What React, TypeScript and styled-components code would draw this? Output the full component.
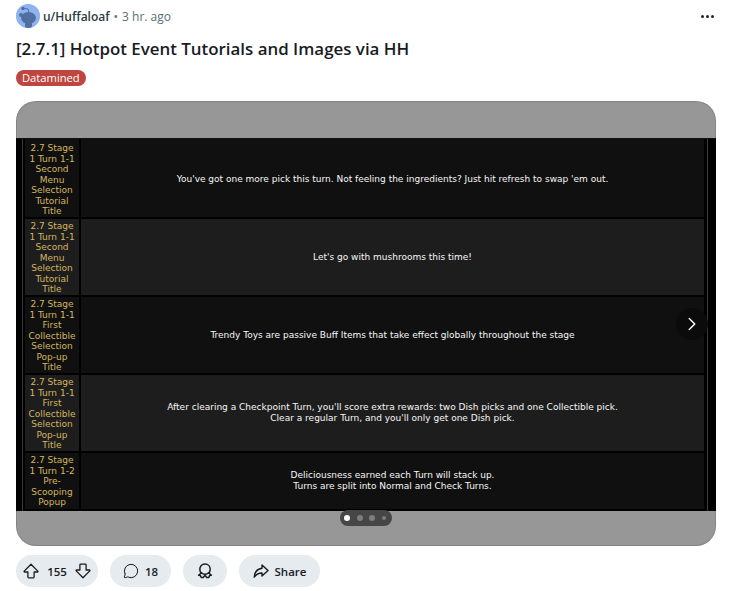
import React from 'react';
import styled, { createGlobalStyle } from 'styled-components';
import { ChevronRight, MessageCircle } from 'lucide-react';

const GlobalStyle = createGlobalStyle`
  html, body {
    margin: 0;
    padding: 0;
    background: #fff;
  }
  body {
    font-family: "Open Sans", "Noto Sans", "Liberation Sans", sans-serif;
  }
`;

const Page = styled.div`
  width: 732px;
  height: 591px;
  box-sizing: border-box;
  padding: 4px 16px 0;
  overflow: hidden;
`;

const Meta = styled.div`
  display: flex;
  align-items: center;
  height: 24px;
  font-size: 12px;
`;

const Avatar = styled.div`
  width: 24px;
  height: 24px;
  border-radius: 50%;
  background: #8fb3f0;
  overflow: hidden;
  margin-right: 3px;
  flex-shrink: 0;
`;

const UserName = styled.span`
  font-weight: 600;
  color: #2a3c42;
`;

const Dot = styled.span`
  margin: 0 4px;
  color: #576f76;
`;

const Age = styled.span`
  color: #576f76;
`;

const MoreButton = styled.div`
  margin-left: auto;
  margin-right: 2px;
  display: flex;
  gap: 2px;
`;

const MoreDot = styled.i`
  width: 3px;
  height: 3px;
  border-radius: 50%;
  background: #1a282d;
`;

const Title = styled.h1`
  margin: 9px 0 0;
  font-size: 16.9px;
  line-height: 24px;
  font-weight: 600;
  color: #181c1f;
`;

const Flair = styled.span`
  display: inline-block;
  margin-top: 9px;
  padding: 0 6px;
  height: 16px;
  line-height: 16px;
  border-radius: 8px;
  background: #bf4640;
  color: #fff;
  font-size: 11.2px;
  vertical-align: top;
`;

const Card = styled.div`
  position: relative;
  margin-top: 15px;
  width: 700px;
  height: 445px;
  padding-top: 37px;
  box-sizing: border-box;
  border-radius: 20px;
  overflow: hidden;
  background: #979797;
  box-shadow: inset 0 0 0 1px rgba(0, 0, 0, 0.12);
`;

const Shot = styled.div`
  height: 373px;
  background: #000;
  display: flex;
  flex-direction: column;
  gap: 2px;
  padding: 0 8px 0 6px;
  box-sizing: border-box;
  border-top: 1px solid #111;
  position: relative;
`;

const ShotEdge = styled.div<{ $left: number }>`
  position: absolute;
  top: 0;
  bottom: 0;
  width: 1px;
  background: #3a3a3a;
  left: ${(p) => p.$left}px;
`;

const Row = styled.div<{ $h: number; $light: boolean }>`
  display: grid;
  grid-template-columns: 54px 623px;
  column-gap: 2px;
  height: ${(p) => p.$h}px;
  margin-left: 3px;
  flex-shrink: 0;
  & > * {
    background: ${(p) => (p.$light ? '#1d1d1d' : '#101010')};
  }
`;

const KeyCell = styled.div<{ $lead: number }>`
  padding-top: ${(p) => p.$lead + 2}px;
  text-align: center;
  font-family: "DejaVu Sans", Verdana, sans-serif;
  font-size: 9px;
  line-height: 10.5px;
  color: #d4b65f;
`;

const TextCell = styled.div<{ $lead: number }>`
  display: flex;
  align-items: center;
  justify-content: center;
  padding-top: ${(p) => p.$lead}px;
  text-align: center;
  font-family: "DejaVu Sans", Verdana, sans-serif;
  font-size: 9px;
  line-height: 11px;
  color: #f7f7f7;
`;

const NextButton = styled.div`
  position: absolute;
  right: 8px;
  top: 207px;
  width: 32px;
  height: 32px;
  border-radius: 50%;
  background: #0b0b0b;
  color: #fff;
  display: flex;
  align-items: center;
  justify-content: center;
`;

const Pager = styled.div`
  position: absolute;
  left: 324px;
  top: 409px;
  height: 16px;
  width: 52px;
  border-radius: 8px;
  background: #464646;
  display: flex;
  align-items: center;
  justify-content: space-between;
  padding: 0 6px 0 4px;
  box-sizing: border-box;
`;

const PagerDot = styled.i<{ $active?: boolean; $small?: boolean }>`
  width: ${(p) => (p.$small ? 4 : 6)}px;
  height: ${(p) => (p.$small ? 4 : 6)}px;
  border-radius: 50%;
  background: ${(p) => (p.$active ? '#fff' : '#7d7d7d')};
`;

const Actions = styled.div`
  display: flex;
  gap: 12px;
  margin-top: 9px;
`;

const Pill = styled.div<{ $w: number }>`
  width: ${(p) => p.$w}px;
  height: 32px;
  border-radius: 16px;
  background: #e5ebee;
  color: #181c1f;
  font-size: 11.5px;
  font-weight: 600;
  display: flex;
  align-items: center;
  justify-content: center;
  box-sizing: border-box;
`;

const Count = styled.span<{ $left: number; $right?: number }>`
  margin-left: ${(p) => p.$left}px;
  margin-right: ${(p) => p.$right ?? 0}px;
`;

const SnooIcon = () => (
  <svg width="24" height="24" viewBox="0 0 24 24">
    <circle cx="12" cy="12" r="12" fill="#8fb3f0" />
    <ellipse cx="12.5" cy="14" rx="7.5" ry="6" fill="#4f6f9f" />
    <rect x="9" y="18" width="7" height="6" rx="2" fill="#4f6f9f" />
    <path d="M13 9 L12 5 L8 4.5" fill="none" stroke="#4f6f9f" strokeWidth="1" />
    <circle cx="7" cy="4.5" r="1.7" fill="#4f6f9f" />
    <circle cx="5" cy="11" r="2" fill="#4f6f9f" />
  </svg>
);

const UpvoteIcon = ({ down }: { down?: boolean }) => (
  <svg width="16" height="16" viewBox="0 0 16 16" style={down ? { transform: 'rotate(180deg)' } : undefined}>
    <path
      d="M8 1.3 L1.2 8.1 C0.9 8.5 1.1 9 1.6 9 H4.9 V14 C4.9 14.5 5.2 14.8 5.7 14.8 H10.3 C10.8 14.8 11.1 14.5 11.1 14 V9 H14.4 C14.9 9 15.1 8.5 14.8 8.1 Z"
      fill="none"
      stroke="#181c1f"
      strokeWidth="1.3"
      strokeLinejoin="round"
    />
  </svg>
);

const AwardIcon = () => (
  <svg width="16" height="16" viewBox="0 0 16 16" fill="none" stroke="#181c1f" strokeWidth="1.5" strokeLinejoin="round">
    <path d="M4.4 10.2 C3.4 9.2 2.8 7.8 2.8 6.2 C2.8 3.2 5 1 8 1 C11 1 13.2 3.2 13.2 6.2 C13.2 7.8 12.6 9.2 11.6 10.2" />
    <path d="M4.4 9.8 L1.6 12.2 L3.4 12.4 L4.2 14.6 L6.2 14.6 L8 12.2 L9.8 14.6 L11.8 14.6 L12.6 12.4 L14.4 12.2 L11.6 9.8 C10.6 10.8 9.4 11.2 8 11.2 C6.6 11.2 5.4 10.8 4.4 9.8 Z" />
  </svg>
);

const ShareIcon = () => (
  <svg width="16" height="16" viewBox="0 0 16 16" fill="none" stroke="#181c1f" strokeWidth="1.4" strokeLinejoin="round">
    <path d="M9 2 L15 7.6 L9 13 V10 C5.6 10 3 11.4 1.2 14.2 C1.4 9.6 4 6 9 5.2 Z" />
  </svg>
);

const rows = [
  {
    key: ['2.7 Stage', '1 Turn 1-1', 'Second', 'Menu', 'Selection', 'Tutorial', 'Title'],
    text: ["You've got one more pick this turn. Not feeling the ingredients? Just hit refresh to swap 'em out."],
    h: 78,
    lead: 2,
    light: false,
  },
  {
    key: ['2.7 Stage', '1 Turn 1-1', 'Second', 'Menu', 'Selection', 'Tutorial', 'Title'],
    text: ["Let's go with mushrooms this time!"],
    h: 76,
    lead: 0,
    light: true,
  },
  {
    key: ['2.7 Stage', '1 Turn 1-1', 'First', 'Collectible', 'Selection', 'Pop-up', 'Title'],
    text: ['Trendy Toys are passive Buff Items that take effect globally throughout the stage'],
    h: 76,
    lead: 0,
    light: false,
  },
  {
    key: ['2.7 Stage', '1 Turn 1-1', 'First', 'Collectible', 'Selection', 'Pop-up', 'Title'],
    text: [
      "After clearing a Checkpoint Turn, you'll score extra rewards: two Dish picks and one Collectible pick.",
      "Clear a regular Turn, and you'll only get one Dish pick.",
    ],
    h: 76,
    lead: 0,
    light: true,
  },
  {
    key: ['2.7 Stage', '1 Turn 1-2', 'Pre-', 'Scooping', 'Popup'],
    text: ['Deliciousness earned each Turn will stack up.', 'Turns are split into Normal and Check Turns.'],
    h: 56,
    lead: 0,
    light: false,
  },
];

export default function App() {
  return (
    <Page>
      <GlobalStyle />
      <Meta>
        <Avatar>
          <SnooIcon />
        </Avatar>
        <UserName>u/Huffaloaf</UserName>
        <Dot>•</Dot>
        <Age>3 hr. ago</Age>
        <MoreButton>
          <MoreDot />
          <MoreDot />
          <MoreDot />
        </MoreButton>
      </Meta>
      <Title>[2.7.1] Hotpot Event Tutorials and Images via HH</Title>
      <Flair>Datamined</Flair>
      <Card>
        <Shot>
          <ShotEdge $left={6} />
          <ShotEdge $left={691} />
          {rows.map((r, i) => (
            <Row key={i} $h={r.h} $light={r.light}>
              <KeyCell $lead={r.lead}>
                {r.key.map((line, j) => (
                  <div key={j}>{line}</div>
                ))}
              </KeyCell>
              <TextCell $lead={r.lead}>
                <div>
                  {r.text.map((line, j) => (
                    <div key={j}>{line}</div>
                  ))}
                </div>
              </TextCell>
            </Row>
          ))}
        </Shot>
        <NextButton>
          <ChevronRight size={22} strokeWidth={1.6} />
        </NextButton>
        <Pager>
          <PagerDot $active />
          <PagerDot />
          <PagerDot />
          <PagerDot $small />
        </Pager>
      </Card>
      <Actions>
        <Pill $w={82}>
          <UpvoteIcon />
          <Count $left={8} $right={8}>155</Count>
          <UpvoteIcon down />
        </Pill>
        <Pill $w={61}>
          <MessageCircle size={16} strokeWidth={1.5} />
          <Count $left={6}>18</Count>
        </Pill>
        <Pill $w={44}>
          <AwardIcon />
        </Pill>
        <Pill $w={81}>
          <ShareIcon />
          <Count $left={6}>Share</Count>
        </Pill>
      </Actions>
    </Page>
  );
}
